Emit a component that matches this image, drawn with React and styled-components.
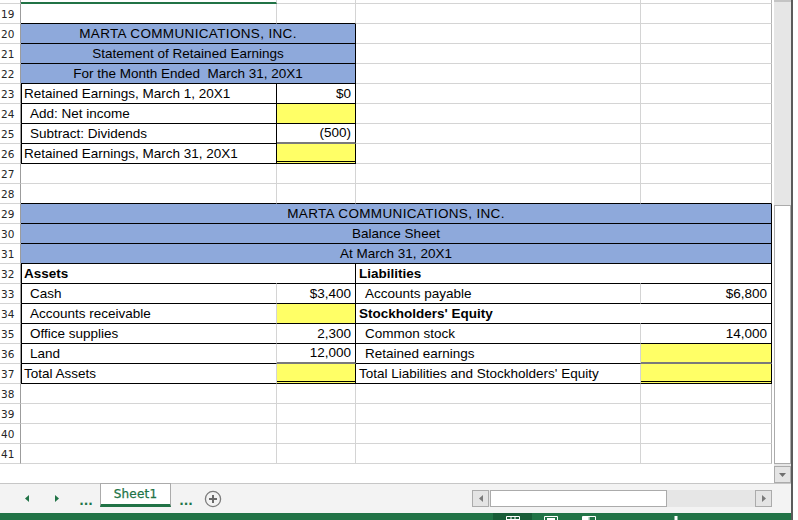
import styled, { createGlobalStyle } from 'styled-components';

const GlobalStyle = createGlobalStyle`
  html, body { margin: 0; padding: 0; background: #fff; }
  body { font-family: 'Liberation Sans', Arial, sans-serif; }
`;

const GRID = '#d4d4d4';
const EDGE = '#b4b4b4';
const BLUE = '#8ea9db';
const YELLOW = '#ffff66';
const GREEN = '#217346';
const BLACK = '1px solid #000';
const TOTAL_TOP = '2px solid #7a7a7a';
const DOUBLE = '3px double #000';

const Window = styled.div`
  width: 798px;
  height: 520px;
  display: flex;
  overflow: hidden;
  background: #fff;
`;

const Main = styled.div`
  width: 791px;
  display: flex;
  flex-direction: column;
`;

const DarkEdge = styled.div`
  width: 2px;
  background: #5b5b5b;
`;

const SheetArea = styled.div`
  height: 483px;
  display: flex;
  gap: 2px;
`;

const Grid = styled.div`
  width: 772px;
  display: flex;
  flex-direction: column;
`;

const Row = styled.div`
  display: grid;
  grid-template-columns: 21px 256px 79px 285px 131px;
  height: ${(p) => p.$h || 20}px;
`;

const RowHead = styled.div`
  box-sizing: border-box;
  border-right: 1px solid #9c9c9c;
  border-bottom: 1px solid ${GRID};
  font: 10.5px 'DejaVu Sans', sans-serif;
  color: #262626;
  padding-left: 1px;
  display: flex;
  align-items: center;
`;

const Cell = styled.div`
  grid-column: span ${(p) => p.$span || 1};
  box-sizing: border-box;
  min-width: 0;
  background: ${(p) => p.$bg || '#fff'};
  border-right: 1px solid ${(p) => p.$r || GRID};
  border-bottom: ${(p) => p.$b || `1px solid ${GRID}`};
  border-left: ${(p) => (p.$l ? BLACK : 'none')};
  display: flex;
  align-items: center;
  justify-content: ${(p) =>
    p.$align === 'right' ? 'flex-end' : p.$align === 'center' ? 'center' : 'flex-start'};
  padding: 0 ${(p) => (p.$align === 'right' ? 4 : 0)}px 1px ${(p) => p.$indent ?? 2}px;
  font-size: 13.5px;
  font-weight: ${(p) => (p.$bold ? 700 : 400)};
  letter-spacing: ${(p) => (p.$wide ? '0.35px' : 'normal')};
  color: #000;
  white-space: pre;
`;

const Filler = styled.div`
  flex: 1;
`;

/* vertical scrollbar */
const VScroll = styled.div`
  width: 17px;
  box-sizing: border-box;
  border-top: 2px solid #c4c4c4;
  background: #e6e6e6;
  display: flex;
  flex-direction: column;
`;

const VThumb = styled.div`
  margin-top: 203px;
  height: 259px;
  box-sizing: border-box;
  background: #fff;
  border: 1px solid #ababab;
`;

const ScrollBtn = styled.div`
  width: 17px;
  height: 17px;
  box-sizing: border-box;
  border: 1px solid #ababab;
  background: #e4e4e4;
  display: flex;
  align-items: center;
  justify-content: center;
  margin-top: ${(p) => p.$mt || 0}px;
`;

/* sheet tabs */
const TabBar = styled.div`
  height: 30px;
  box-sizing: border-box;
  border-top: 1px solid #c6c6c6;
  background: #f3f3f3;
  display: flex;
  align-items: center;
  padding-left: 12px;
`;

const NavSlot = styled.div`
  width: ${(p) => p.$w || 30}px;
  height: 100%;
  display: flex;
  align-items: center;
  justify-content: center;
  color: ${GREEN};
  font: bold 12px 'DejaVu Sans', sans-serif;
  padding-top: ${(p) => (p.$dots ? 4 : 0)}px;
  box-sizing: border-box;
`;

const Tab = styled.div`
  align-self: flex-start;
  margin-top: -1px;
  width: 71px;
  height: 24px;
  box-sizing: border-box;
  background: #fff;
  border: 1px solid #ababab;
  border-bottom: 3px solid ${GREEN};
  display: flex;
  align-items: center;
  justify-content: center;
  color: ${GREEN};
  font: 12px 'DejaVu Sans', sans-serif;
  -webkit-text-stroke: 0.25px ${GREEN};
  letter-spacing: 0.2px;
`;

const HScroll = styled.div`
  margin-left: auto;
  margin-right: 19px;
  width: 300px;
  height: 17px;
  display: flex;
  background: #e6e6e6;
`;

const HThumb = styled.div`
  width: 177px;
  box-sizing: border-box;
  background: #fff;
  border: 1px solid #ababab;
  margin-left: 1px;
`;

/* status bar */
const StatusBar = styled.div`
  height: 7px;
  background: ${GREEN};
  display: flex;
  align-items: flex-start;
  padding-left: 493px;
`;

const ViewActive = styled.div`
  width: 39px;
  height: 7px;
  background: #185c37;
  display: flex;
  padding-left: 13px;
  box-sizing: border-box;
`;

const ViewIcon = styled.svg`
  display: block;
  margin-left: ${(p) => p.$ml || 0}px;
`;

const Tri = ({ dir, color = '#7a7a7a' }) => {
  const d = {
    left: 'M4 0 L0 3.5 L4 7 Z',
    right: 'M0 0 L4 3.5 L0 7 Z',
    down: 'M0 0 L7 0 L3.5 4 Z',
  }[dir];
  const w = dir === 'down' ? 7 : 4;
  const h = dir === 'down' ? 4 : 7;
  return (
    <svg width={w} height={h} viewBox={`0 0 ${w} ${h}`}>
      <path d={d} fill={color} />
    </svg>
  );
};

const PlusCircle = () => (
  <svg width="18" height="18" viewBox="0 0 18 18">
    <circle cx="9" cy="9" r="7.6" fill="none" stroke="#7d7d7d" strokeWidth="1.3" />
    <path d="M9 5 V13 M5 9 H13" stroke="#6a6a6a" strokeWidth="2" />
  </svg>
);

const blank = (n) => (
  <Row key={n}>
    <RowHead>{n}</RowHead>
    <Cell />
    <Cell />
    <Cell />
    <Cell $r={EDGE} />
  </Row>
);

const Header = ({ n, span, text, wide, last }) => (
  <Row>
    <RowHead>{n}</RowHead>
    <Cell $span={span} $bg={BLUE} $r="#000" $b={BLACK} $align="center" $indent={0} $wide={wide}>
      {text}
    </Cell>
    {!last && (
      <>
        <Cell />
        <Cell $r={EDGE} />
      </>
    )}
  </Row>
);

const StmtRow = ({ n, label, indent, value, bg, bottom }) => (
  <Row>
    <RowHead>{n}</RowHead>
    <Cell $l $r="#000" $b={BLACK} $indent={indent ? 8 : 2}>
      {label}
    </Cell>
    <Cell $r="#000" $b={bottom || BLACK} $bg={bg} $align="right">
      {value}
    </Cell>
    <Cell />
    <Cell $r={EDGE} />
  </Row>
);

const BalRow = ({ n, a, aBold, aIndent, b, bBg, bBottom, aSep = GRID, c, cBold, cIndent, cSep = GRID, d, dBg, dBottom }) => (
  <Row>
    <RowHead>{n}</RowHead>
    <Cell $l $r={aSep} $b={BLACK} $bold={aBold} $indent={aIndent ? 8 : 2}>
      {a}
    </Cell>
    <Cell $r="#000" $b={bBottom || BLACK} $bg={bBg} $align="right">
      {b}
    </Cell>
    <Cell $r={cSep} $b={BLACK} $bold={cBold} $indent={cIndent ? 9 : 3}>
      {c}
    </Cell>
    <Cell $r="#000" $b={dBottom || BLACK} $bg={dBg} $align="right">
      {d}
    </Cell>
  </Row>
);

export default function App() {
  return (
    <>
      <GlobalStyle />
      <Window>
        <Main>
          <SheetArea>
            <Grid>
              <Row $h={4}>
                <RowHead />
                <Cell $b={`2px solid ${GREEN}`} />
                <Cell />
                <Cell />
                <Cell $r={EDGE} />
              </Row>
              <Row>
                <RowHead>19</RowHead>
                <Cell $b={BLACK} />
                <Cell $b={BLACK} />
                <Cell />
                <Cell $r={EDGE} />
              </Row>
              <Header n={20} span={2} text="MARTA COMMUNICATIONS, INC." wide />
              <Header n={21} span={2} text="Statement of Retained Earnings" />
              <Header n={22} span={2} text="For the Month Ended  March 31, 20X1" />
              <StmtRow n={23} label="Retained Earnings, March 1, 20X1" value="$0" />
              <StmtRow n={24} label="Add: Net income" indent bg={YELLOW} />
              <StmtRow n={25} label="Subtract: Dividends" indent value="(500)" bottom={TOTAL_TOP} />
              <StmtRow n={26} label="Retained Earnings, March 31, 20X1" bg={YELLOW} bottom={DOUBLE} />
              {blank(27)}
              <Row>
                <RowHead>28</RowHead>
                <Cell $b={BLACK} />
                <Cell $b={BLACK} />
                <Cell $b={BLACK} />
                <Cell $r={EDGE} $b={BLACK} />
              </Row>
              <Header n={29} span={4} text="MARTA COMMUNICATIONS, INC." wide last />
              <Header n={30} span={4} text="Balance Sheet" last />
              <Header n={31} span={4} text="At March 31, 20X1" last />
              <BalRow n={32} a="Assets" aBold aSep="#fff" c="Liabilities" cBold cSep="#fff" />
              <BalRow n={33} a="Cash" aIndent b="$3,400" c="Accounts payable" cIndent d="$6,800" />
              <BalRow n={34} a="Accounts receivable" aIndent bBg={YELLOW} c="Stockholders' Equity" cBold cSep="#fff" />
              <BalRow n={35} a="Office supplies" aIndent b="2,300" c="Common stock" cIndent d="14,000" />
              <BalRow
                n={36}
                a="Land"
                aIndent
                b="12,000"
                bBottom={TOTAL_TOP}
                c="Retained earnings"
                cIndent
                dBg={YELLOW}
                dBottom={TOTAL_TOP}
              />
              <BalRow
                n={37}
                a="Total Assets"
                bBg={YELLOW}
                bBottom={DOUBLE}
                c="Total Liabilities and Stockholders' Equity"
                dBg={YELLOW}
                dBottom={DOUBLE}
              />
              {blank(38)}
              {blank(39)}
              {blank(40)}
              {blank(41)}
              <Filler />
            </Grid>
            <VScroll>
              <VThumb />
              <ScrollBtn $mt={2}>
                <Tri dir="down" color="#6f6f6f" />
              </ScrollBtn>
            </VScroll>
          </SheetArea>

          <TabBar>
            <NavSlot>
              <Tri dir="left" color={GREEN} />
            </NavSlot>
            <NavSlot>
              <Tri dir="right" color={GREEN} />
            </NavSlot>
            <NavSlot $w={28} $dots>
              ...
            </NavSlot>
            <Tab>Sheet1</Tab>
            <NavSlot $dots>...</NavSlot>
            <NavSlot $w={24}>
              <PlusCircle />
            </NavSlot>
            <HScroll>
              <ScrollBtn>
                <Tri dir="left" />
              </ScrollBtn>
              <HThumb />
              <Filler />
              <ScrollBtn>
                <Tri dir="right" />
              </ScrollBtn>
            </HScroll>
          </TabBar>

          <StatusBar>
            <ViewActive>
              <ViewIcon width="14" height="7" viewBox="0 0 14 7">
                <path d="M0.5 7 V3.5 H13.5 V7 M5 3.5 V7 M9 3.5 V7 M0.5 6.5 H13.5" stroke="#fff" fill="none" />
              </ViewIcon>
            </ViewActive>
            <ViewIcon $ml={12} width="14" height="7" viewBox="0 0 14 7">
              <path d="M0.5 7 V3.5 H13.5 V7" stroke="#fff" fill="none" />
              <rect x="3" y="5" width="8" height="2" fill="#fff" />
            </ViewIcon>
            <ViewIcon $ml={24} width="14" height="7" viewBox="0 0 14 7">
              <path d="M0.5 7 V3.5 H13.5 V7 M7 3.5 V7" stroke="#fff" fill="none" />
              <rect x="1" y="4" width="5.5" height="3" fill="#fff" />
            </ViewIcon>
            <ViewIcon $ml={77} width="6" height="7" viewBox="0 0 6 7">
              <rect x="1.5" y="3" width="3" height="4" fill="#fff" />
            </ViewIcon>
          </StatusBar>
        </Main>
        <DarkEdge />
      </Window>
    </>
  );
}
